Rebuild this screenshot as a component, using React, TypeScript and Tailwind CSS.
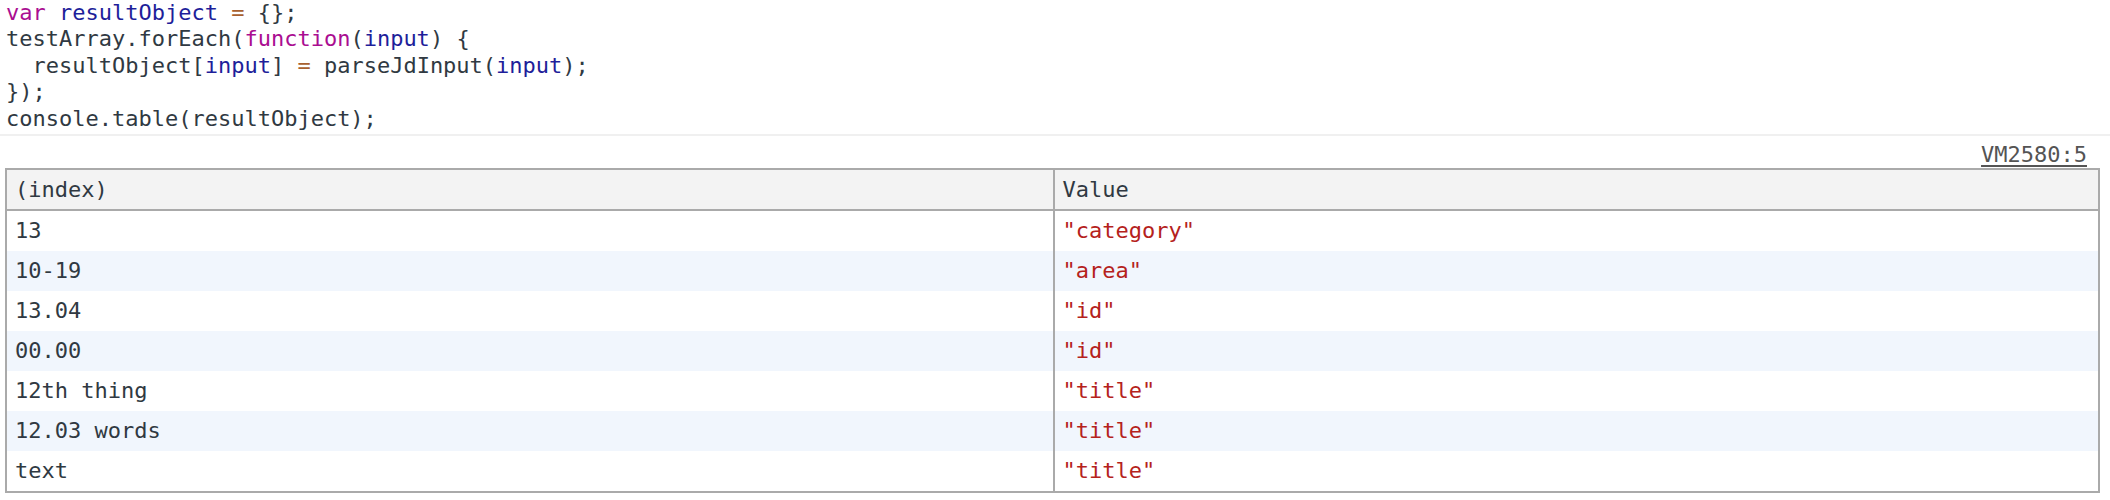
const kw = "text-[#aa0d91]";
const vr = "text-[#1e1e9a]";
const op = "text-[#a8602f]";

const rows: [string, string][] = [
  ["13", '"category"'],
  ["10-19", '"area"'],
  ["13.04", '"id"'],
  ["00.00", '"id"'],
  ["12th thing", '"title"'],
  ["12.03 words", '"title"'],
  ["text", '"title"'],
];

export default function App() {
  return (
    <div className="w-[2110px] h-[500px] overflow-hidden bg-white font-['DejaVu_Sans_Mono',monospace] text-[22px] leading-[26.4px] text-[#303942]">
      {/* code that was typed into the console */}
      <div className="border-b-2 border-[#f0f0f0] pb-[2px] pl-[6px] whitespace-pre">
        <div>
          <span className={kw}>var</span> <span className={vr}>resultObject</span>{" "}
          <span className={op}>=</span> {"{};"}
        </div>
        <div>
          testArray.forEach(<span className={kw}>function</span>(<span className={vr}>input</span>) {"{"}
        </div>
        <div>
          {"  resultObject["}
          <span className={vr}>input</span>] <span className={op}>=</span> parseJdInput(
          <span className={vr}>input</span>);
        </div>
        <div>{"});"}</div>
        <div>console.table(resultObject);</div>
      </div>

      {/* source link */}
      <div className="flex justify-end pr-[23px] pt-[6px]">
        <span className="text-[#545454] underline underline-offset-[3px]">VM2580:5</span>
      </div>

      {/* table */}
      <div className="ml-[5px] mr-[10px] border-2 border-[#aaa]">
        <div className="grid grid-cols-2 h-[41px] bg-[#f3f3f3] border-b-2 border-[#aaa]">
          <div className="flex items-center pl-[8px]">(index)</div>
          <div className="flex items-center pl-[8px] border-l-2 border-[#aaa]">Value</div>
        </div>
        {rows.map(([idx, val], i) => (
          <div
            key={idx}
            className={`grid grid-cols-2 h-[40px] ${i % 2 === 1 ? "bg-[#f1f6fd]" : "bg-white"}`}
          >
            <div className="flex items-center pl-[8px] whitespace-pre">{idx}</div>
            <div className="flex items-center pl-[8px] border-l-2 border-[#aaa] text-[#b5221c]">{val}</div>
          </div>
        ))}
      </div>
    </div>
  );
}
